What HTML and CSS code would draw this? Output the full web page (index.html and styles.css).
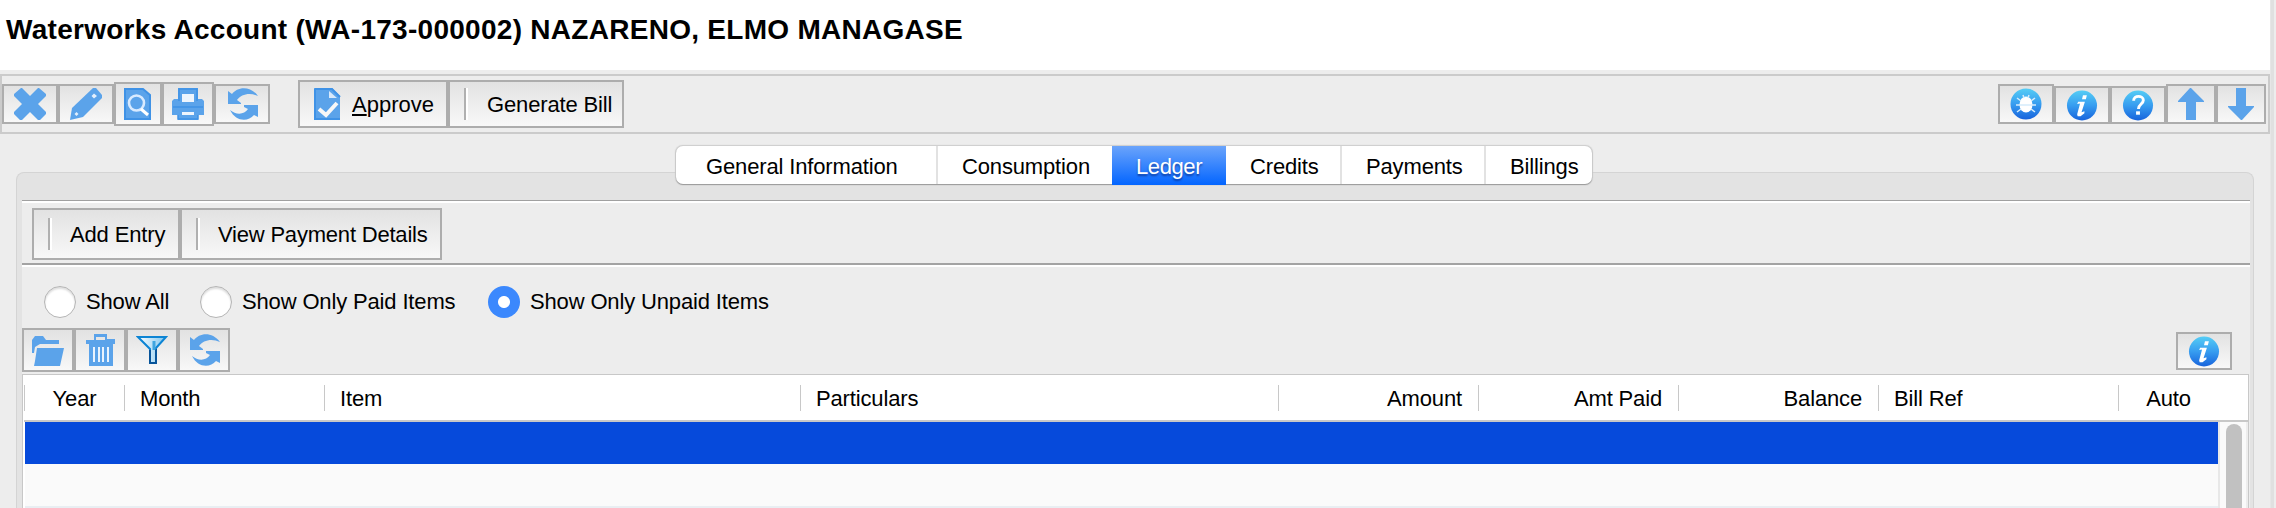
FILE: index.html
```html
<!DOCTYPE html>
<html lang="en">
<head>
<meta charset="utf-8">
<title>Waterworks Account</title>
<link rel="stylesheet" href="styles.css">
</head>
<body>
<svg class="defs" width="0" height="0">
  <defs>
    <linearGradient id="orb" x1="0" y1="0" x2="0" y2="1"><stop offset="0" stop-color="#55cdf5"/><stop offset=".5" stop-color="#379df0"/><stop offset="1" stop-color="#1763dc"/></linearGradient>
    <linearGradient id="fun" x1="0" y1="0" x2="1" y2="0"><stop offset="0" stop-color="#fff"/><stop offset="1" stop-color="#7cc4ee"/></linearGradient>
    <symbol id="refresh" viewBox="0 0 32 32"><path d="M2 3l4 3C11-1 24-3 32 8 24 4 15 6 11 12l4 3v1H2z"/><path d="M32 17v12l-4-2C22 34 10 34 4 22c6 5 14 5 18-1l-4-2v-2z"/></symbol>
    <symbol id="info" viewBox="0 0 32 32"><circle cx="16" cy="16" r="15.500" fill="url(#orb)"/><path d="M17 5.500h4l-1 4h-4zM12 12h7l-3.500 11 3-1v2l-4 3h-3l-.5-2L14 14l-3 .5z" fill="#fff"/></symbol>
  </defs>
</svg>
<div class="window">
  <h1 class="title">Waterworks Account (WA-173-000002) NAZARENO, ELMO MANAGASE</h1>
  <div class="toolbar">
    <div class="group">
      <button class="btn w56 h40"><svg class="ico" viewBox="0 0 32 32"><path d="M7 0h1l8 8 8-8h1l7 6v2l-8 8 8 8v2l-6 6h-2l-8-8-8 8H6l-6-6v-2l8-8-8-8V6z"/></svg></button>
      <button class="btn w56 h40"><svg class="ico" viewBox="0 0 32 32"><path d="M23 0h3l6 7v3L13 29 0 32l2-12z"/><path d="M6.500 24l2 2-2 2-2-2zM24 5.500l3 2.500-3 2.500L21.500 8z" fill="#e3effc"/></svg></button>
      <button class="btn w48 h44"><svg class="ico" viewBox="0 0 32 32"><path d="M3 1h18l7 6v24H3z" stroke="#3f92e6" stroke-width="2"/><circle cx="14.500" cy="15" r="7.500" fill="none" stroke="#d8eaff" stroke-width="2.600"/><path d="M19 21l7 6" stroke="#fff" stroke-width="3"/></svg></button>
      <button class="btn w52 h44"><svg class="ico" viewBox="0 0 32 32"><path d="M6 0h20v11h4l2 2v14h-6v5H6v-5H0V13l2-2h4z"/><path d="M7 13V1h18v12M1 19h30M6 27v4h20v-4" fill="none" stroke="#3f92e6" stroke-width="1.500"/><path d="M10 6h12v8H10zM10 24h12v3H10z" fill="#eef5fd"/></svg></button>
      <button class="btn w56 h40"><svg class="ico"><use href="#refresh"/></svg></button>
    </div>
    <div class="group actions">
      <button class="btn text approve"><svg class="ico doc" viewBox="0 0 28 32"><path d="M0 0h18l8 8v24H0z"/><path d="M1 1h17l8 8M1 1v30h25" fill="none" stroke="#3f92e6" stroke-width="2"/><path d="M15 3v7h8z" fill="#d8e9fb"/><path d="M5 21l7 6L23 15" fill="none" stroke="#f7f7f7" stroke-width="4"/></svg><span><u>A</u>pprove</span></button>
      <button class="btn text generate"><i class="sep"></i><span>Generate Bill</span></button>
    </div>
    <div class="group right">
      <button class="btn w56 h40"><svg class="ico" viewBox="0 0 32 32"><circle cx="16" cy="16" r="15.500" fill="url(#orb)"/><ellipse cx="16" cy="16.500" rx="6.500" ry="8" fill="#fff"/><path d="M7 10l4 3M25 10l-4 3M6 17h20M7 24l4-3M25 24l-4-3M13 7l1 3M19 7l-1 3" stroke="#d5ecfc" stroke-width="1.500"/></svg></button>
      <button class="btn w56 h38"><svg class="ico orb"><use href="#info"/></svg></button>
      <button class="btn w56 h38"><svg class="ico orb" viewBox="0 0 32 32"><circle cx="16" cy="16" r="15.500" fill="url(#orb)"/><path d="M11.500 11c0-6 10-5.500 10-.5 0 4-5 4-5 9" fill="none" stroke="#fff" stroke-width="3"/><path d="M14 22h4v3.500h-4z" fill="#fff"/></svg></button>
      <button class="btn w50 h40"><svg class="ico" viewBox="0 0 32 32"><path d="M16 0l13 13v1h-8v18H11V14H3v-1L15 0z"/></svg></button>
      <button class="btn w50 h40"><svg class="ico" viewBox="0 0 32 32"><path d="M11 0h10v18h8v1L17 32h-1L3 19v-1h8z"/></svg></button>
    </div>
  </div>
  <div class="tabs">
    <div class="tab general">General Information</div>
    <div class="tab consumption">Consumption</div>
    <div class="tab ledger">Ledger</div>
    <div class="tab credits">Credits</div>
    <div class="tab payments">Payments</div>
    <div class="tab billings">Billings</div>
  </div>
  <div class="panel">
    <div class="body">
      <div class="actionbar">
        <button class="btn text add"><i class="sep"></i><span>Add Entry</span></button>
        <button class="btn text view"><i class="sep"></i><span>View Payment Details</span></button>
      </div>
      <div class="filters">
        <label class="choice all"><i class="radio"></i><span>Show All</span></label>
        <label class="choice paid"><i class="radio"></i><span>Show Only Paid Items</span></label>
        <label class="choice unpaid"><i class="radio on"></i><span>Show Only Unpaid Items</span></label>
      </div>
      <div class="tools">
        <button class="btn w52 h44"><svg class="ico" viewBox="0 0 32 32"><path d="M0 6l3-4h8l3 4h13v4H8l-5 3-1 6H0zM5 14h27l-4 18H2l1-5z"/></svg></button>
        <button class="btn w52 h44"><svg class="ico" viewBox="0 0 32 32"><path d="M10 0h13v5h8v5h-2v22H5V10H2V6h8zM12 3v3h9V3z" fill-rule="evenodd"/><path d="M9 13h2v15H9zM14 13h2v15h-2zM18 13h2v15h-2zM23 13h2v15h-2z" fill="#eaf3fd"/></svg></button>
        <button class="btn w52 h44"><svg class="ico" viewBox="0 0 32 32"><path d="M2 3h28l-10 11v15h-6V15z" fill="url(#fun)" stroke="#0c84d4" stroke-width="2"/><path d="M14 16v13h6V15" fill="none" stroke="#07549a" stroke-width="2"/><path d="M18 7v9" stroke="#3ea5e0" stroke-width="3"/></svg></button>
        <button class="btn w52 h44"><svg class="ico"><use href="#refresh"/></svg></button>
        <button class="btn w56 h38 help"><svg class="ico orb"><use href="#info"/></svg></button>
      </div>
      <div class="table">
        <div class="head">
          <div class="th center">Year</div><div class="th">Month</div><div class="th">Item</div><div class="th">Particulars</div><div class="th num">Amount</div><div class="th num">Amt Paid</div><div class="th num">Balance</div><div class="th">Bill Ref</div><div class="th center auto">Auto</div><div class="corner"></div>
        </div>
        <div class="content">
          <div class="rows"><div class="row selected"></div><div class="row"></div></div>
          <div class="scroll"><div class="thumb"></div></div>
        </div>
      </div>
    </div>
  </div>
</div>
</body>
</html>
```
FILE: styles.css
```css
* { box-sizing: border-box; }
html, body { margin: 0; height: 508px; overflow: hidden; }
body {
  background: linear-gradient(90deg, #ededed 2270px, #e6e6e6 2270px, #e6e6e6 2271px, #e0e0e0 2271px, #e0e0e0 2274px, #ededed 2274px);
  font: 22px/26px "Liberation Sans", Arial, sans-serif;
  letter-spacing: -0.15px;
  color: #000;
}
.defs { display: block; }
.window { width: 2270px; height: 508px; display: flex; flex-direction: column; overflow: hidden; }
.title { margin: 0; height: 70px; flex: none; padding: 14px 0 0 6px; background: #fff; font-size: 28px; line-height: 32px; letter-spacing: 0.28px; white-space: nowrap; }
.toolbar { margin-top: 4px; height: 60px; flex: none; display: flex; align-items: center; border: 2px solid #cbcbcb; }
.group { display: flex; align-items: center; }
.actions { margin-left: 28px; }
.right { margin-left: auto; padding-right: 2px; align-items: flex-end; }
.btn {
  appearance: none; flex: none; margin: 0; padding: 0; display: flex; align-items: center; justify-content: center;
  border: 2px solid #adadad; border-radius: 0; background: linear-gradient(#e2e2e2, #f8f8f8);
  font: inherit; letter-spacing: inherit; color: inherit; white-space: nowrap;
}
.w48 { width: 48px; } .w50 { width: 50px; } .w52 { width: 52px; } .w56 { width: 56px; }
.h38 { height: 38px; } .h40 { height: 40px; } .h44 { height: 44px; }
.ico { width: 32px; height: 32px; fill: #5ba3ea; display: block; flex: none; }
.orb { width: 32px; height: 31px; }
.text { justify-content: flex-start; height: 48px; padding-left: 14px; }
.text span { padding-top: 1px; }
.actions .text { letter-spacing: 0; }
.approve { width: 150px; }
.approve .doc { width: 28px; margin-right: 10px; }
.approve u { text-decoration-thickness: 2px; text-underline-offset: 2px; text-decoration-skip-ink: none; }
.generate { width: 176px; }
.actions .generate { letter-spacing: -0.15px; }
.generate .sep { margin-right: 19px; }
.sep { width: 4px; height: 32px; flex: none; margin-right: 18px; background: linear-gradient(90deg, #b0b0b0 50%, #fff 50%); }
.tabs {
  position: relative; z-index: 1; display: flex; flex: none; width: 916px; height: 38px; margin: 12px 0 -12px 676px;
  border-radius: 7px; background: #fff; box-shadow: 0 1px 1px #999, 0 0 1px 0.5px #ccc;
}
.tab { padding-top: 8px; padding-left: 24px; border-right: 2px solid #e2e2e2; white-space: nowrap; }
.general { width: 262px; padding-left: 30px; }
.consumption { width: 174px; border: 0; }
.ledger { width: 114px; height: 39px; border: 0; background: linear-gradient(#6ba4fb, #0365ff); color: #fff; text-shadow: 0 2px 2px rgba(0, 0, 60, .45); letter-spacing: -0.4px; }
.credits { width: 116px; }
.payments { width: 144px; }
.billings { width: 106px; border: 0; }
.panel { flex: 1; margin: 0 16px 0 16px; padding: 27px 3px 0 5px; border: 1px solid #d4d4d4; border-bottom: 0; border-radius: 8px 8px 0 0; background: #e3e3e3; }
.body { background: #ededed; height: 308px; border-top: 1px solid #a0a0a0; }
.actionbar { height: 64px; display: flex; align-items: center; padding: 2px 0 0 10px; border-top: 2px solid #fff; border-bottom: 2px solid #a3a3a3; }
.actionbar .btn { height: 52px; }
.add { width: 148px; }
.view { width: 262px; letter-spacing: -0.2px; }
.filters { height: 63px; display: flex; border-top: 2px solid #fff; padding: 19px 0 0 22px; }
.choice { display: flex; height: 32px; align-items: center; gap: 10px; white-space: nowrap; }
.all { width: 156px; }
.paid { width: 288px; }
.radio { width: 32px; height: 32px; border-radius: 50%; background: #fff; border: 1px solid #b4b4b4; box-shadow: inset 0 2px 2px #ddd; }
.radio.on { border: 0; box-shadow: none; background: radial-gradient(circle, #fff 5.500px, #3b88fd 6.500px); }
.tools { height: 46px; display: flex; align-items: flex-start; }
.help { margin: 4px 18px 0 auto; }
.table { width: 2227px; height: 134px; border: 1px solid #c8c8c8; border-bottom: 0; background: #fff; padding-left: 1px; }
.head { height: 47px; display: grid; grid-template-columns: 100px 200px 476px 478px 200px 200px 200px 240px 100px 30px; padding-top: 10px; border-bottom: 2px solid #c8c8c8; }
.th { height: 26px; padding: 1px 16px 0 15px; border-left: 1px solid #c8c8c8; white-space: nowrap; line-height: 26px; }
.center { text-align: center; padding: 1px 0 0; }
.num { text-align: right; }
.corner { height: 36px; }
.content { display: flex; height: 86px; padding-left: 1px; }
.rows { width: 2193px; display: flex; flex-direction: column; background: #e9eef2; }
.row { height: 42px; background: #fafafa; }
.row.selected { background: #064adb; }
.scroll { flex: 1; border-left: 2px solid #e8e8e8; border-right: 2px solid #ededed; background: #fafafa; padding: 2px 0 0 6px; }
.thumb { width: 16px; height: 100px; border-radius: 8px; background: #c1c1c1; }
```
